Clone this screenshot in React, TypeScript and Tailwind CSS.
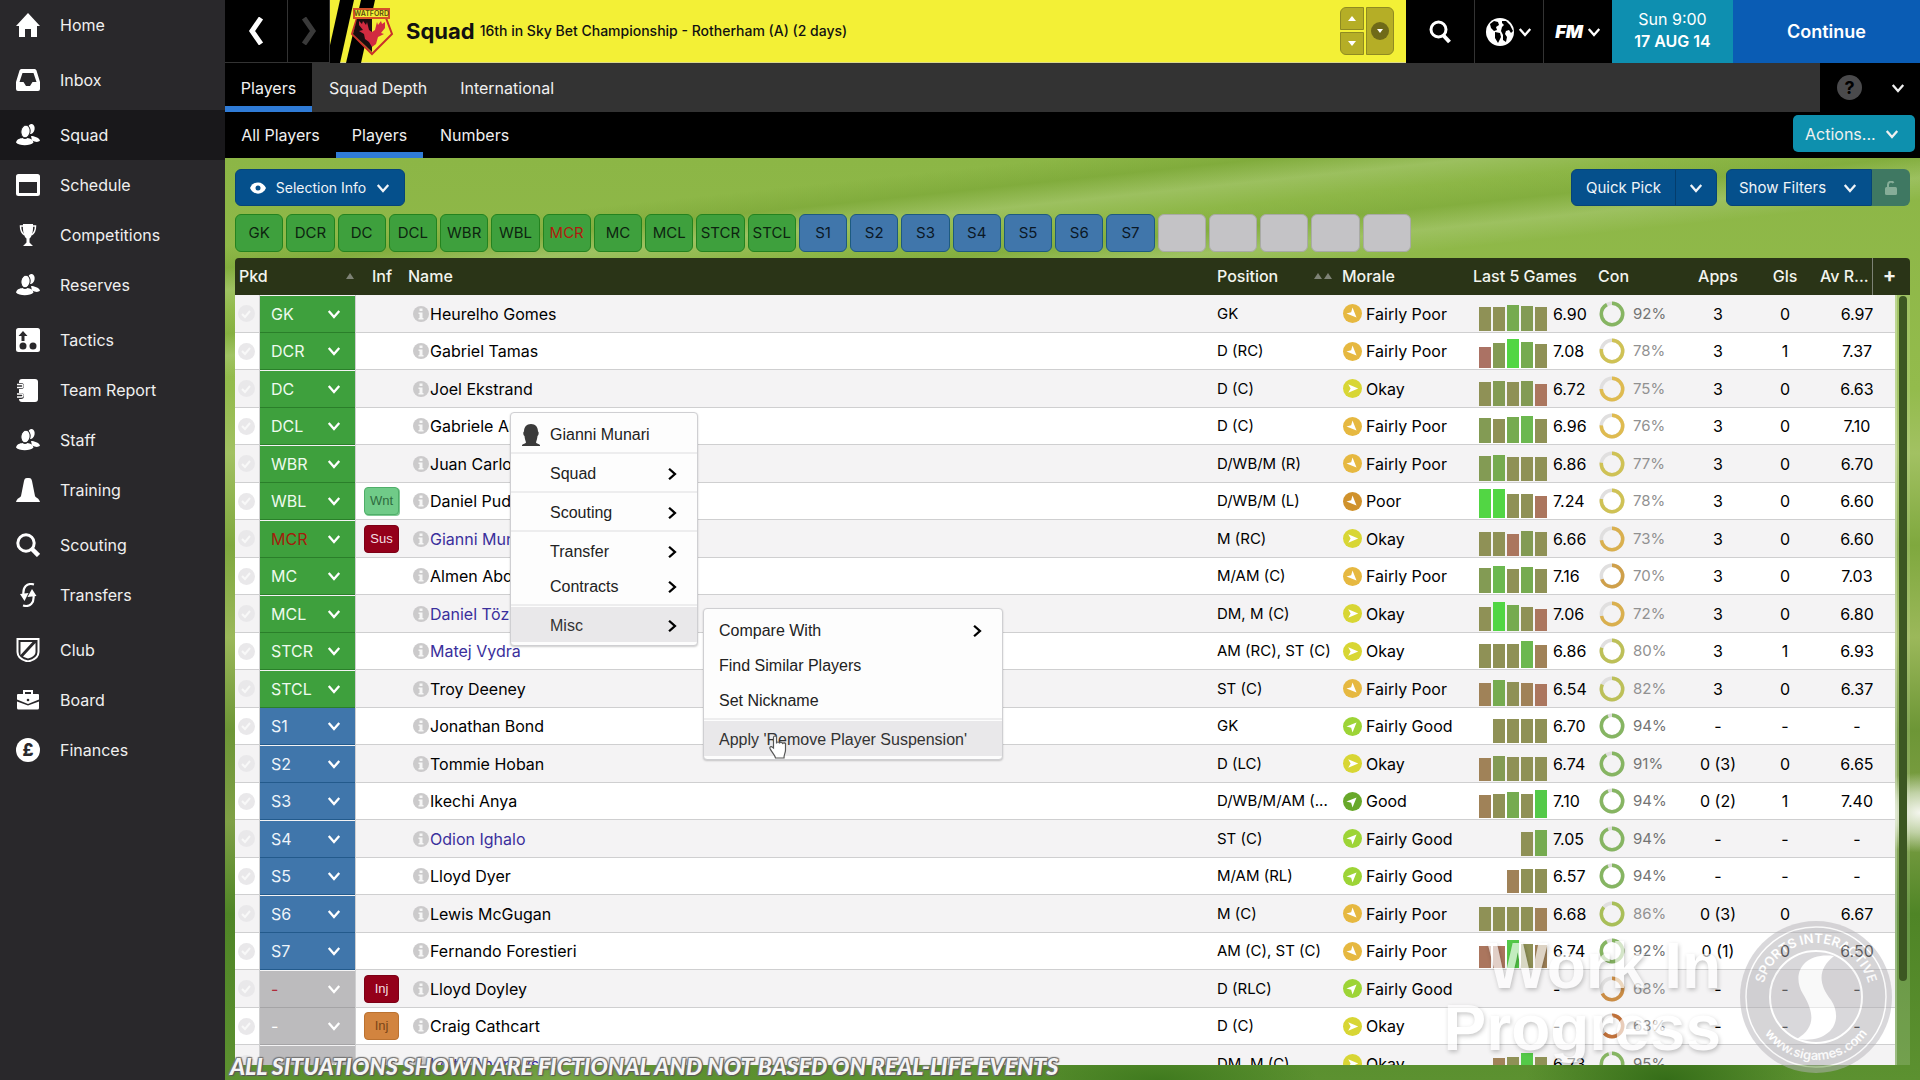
import type { ReactNode } from 'react'

type Player = {
  pick: string
  inf?: 'Wnt' | 'Sus' | 'Inj' | 'InjMinor'
  name: string
  loan?: boolean
  pos: string
  morale: string
  form: number[]
  rating: string
  con: number
  apps: string
  gls: string
  avg: string
}

const PLAYERS: Player[] = [
  { pick: 'GK', name: 'Heurelho Gomes', pos: 'GK', morale: 'Fairly Poor', form: [24, 24, 26, 25, 24], rating: '6.90', con: 92, apps: '3', gls: '0', avg: '6.97' },
  { pick: 'DCR', name: 'Gabriel Tamas', pos: 'D (RC)', morale: 'Fairly Poor', form: [21, 25, 29, 26, 24], rating: '7.08', con: 78, apps: '3', gls: '1', avg: '7.37' },
  { pick: 'DC', name: 'Joel Ekstrand', pos: 'D (C)', morale: 'Okay', form: [24, 25, 24, 25, 22], rating: '6.72', con: 75, apps: '3', gls: '0', avg: '6.63' },
  { pick: 'DCL', name: 'Gabriele Angella', pos: 'D (C)', morale: 'Fairly Poor', form: [25, 24, 26, 27, 24], rating: '6.96', con: 76, apps: '3', gls: '0', avg: '7.10' },
  { pick: 'WBR', name: 'Juan Carlos Paredes', pos: 'D/WB/M (R)', morale: 'Fairly Poor', form: [25, 26, 24, 24, 24], rating: '6.86', con: 77, apps: '3', gls: '0', avg: '6.70' },
  { pick: 'WBL', inf: 'Wnt', name: 'Daniel Pudil', pos: 'D/WB/M (L)', morale: 'Poor', form: [29, 29, 24, 24, 22], rating: '7.24', con: 78, apps: '3', gls: '0', avg: '6.60' },
  { pick: 'MCR', inf: 'Sus', name: 'Gianni Munari', loan: true, pos: 'M (RC)', morale: 'Okay', form: [24, 24, 22, 25, 24], rating: '6.66', con: 73, apps: '3', gls: '0', avg: '6.60' },
  { pick: 'MC', name: 'Almen Abdi', pos: 'M/AM (C)', morale: 'Fairly Poor', form: [25, 27, 24, 26, 24], rating: '7.16', con: 70, apps: '3', gls: '0', avg: '7.03' },
  { pick: 'MCL', name: 'Daniel Tözsér', loan: true, pos: 'DM, M (C)', morale: 'Okay', form: [24, 29, 26, 24, 22], rating: '7.06', con: 72, apps: '3', gls: '0', avg: '6.80' },
  { pick: 'STCR', name: 'Matej Vydra', loan: true, pos: 'AM (RC), ST (C)', morale: 'Okay', form: [24, 24, 24, 27, 23], rating: '6.86', con: 80, apps: '3', gls: '1', avg: '6.93' },
  { pick: 'STCL', name: 'Troy Deeney', pos: 'ST (C)', morale: 'Fairly Poor', form: [23, 26, 24, 23, 22], rating: '6.54', con: 82, apps: '3', gls: '0', avg: '6.37' },
  { pick: 'S1', name: 'Jonathan Bond', pos: 'GK', morale: 'Fairly Good', form: [24, 24, 24, 24], rating: '6.70', con: 94, apps: '-', gls: '-', avg: '-' },
  { pick: 'S2', name: 'Tommie Hoban', pos: 'D (LC)', morale: 'Okay', form: [23, 25, 24, 24, 24], rating: '6.74', con: 91, apps: '0 (3)', gls: '0', avg: '6.65' },
  { pick: 'S3', name: 'Ikechi Anya', pos: 'D/WB/M/AM (...', morale: 'Good', form: [23, 24, 26, 24, 28], rating: '7.10', con: 94, apps: '0 (2)', gls: '1', avg: '7.40' },
  { pick: 'S4', name: 'Odion Ighalo', loan: true, pos: 'ST (C)', morale: 'Fairly Good', form: [24, 26], rating: '7.05', con: 94, apps: '-', gls: '-', avg: '-' },
  { pick: 'S5', name: 'Lloyd Dyer', pos: 'M/AM (RL)', morale: 'Fairly Good', form: [23, 24, 24], rating: '6.57', con: 94, apps: '-', gls: '-', avg: '-' },
  { pick: 'S6', name: 'Lewis McGugan', pos: 'M (C)', morale: 'Fairly Poor', form: [24, 24, 24, 24, 23], rating: '6.68', con: 86, apps: '0 (3)', gls: '0', avg: '6.67' },
  { pick: 'S7', name: 'Fernando Forestieri', pos: 'AM (C), ST (C)', morale: 'Fairly Poor', form: [22, 22, 28, 24, 23], rating: '6.74', con: 92, apps: '0 (1)', gls: '0', avg: '6.50' },
  { pick: '-', inf: 'Inj', name: 'Lloyd Doyley', pos: 'D (RLC)', morale: 'Fairly Good', form: [], rating: '-', con: 68, apps: '-', gls: '-', avg: '-' },
  { pick: '-', inf: 'InjMinor', name: 'Craig Cathcart', pos: 'D (C)', morale: 'Okay', form: [], rating: '-', con: 63, apps: '-', gls: '-', avg: '-' },
  { pick: '', name: 'Keith Andrews', loan: true, pos: 'DM, M (C)', morale: 'Okay', form: [23, 24, 28, 24], rating: '6.73', con: 95, apps: '', gls: '', avg: '' },
]

const SLOTS = ['GK', 'DCR', 'DC', 'DCL', 'WBR', 'WBL', 'MCR', 'MC', 'MCL', 'STCR', 'STCL', 'S1', 'S2', 'S3', 'S4', 'S5', 'S6', 'S7', '', '', '', '', '']

const BAR_COLORS: Record<number, string> = {
  21: 'bg-[#ab7264]',
  22: 'bg-[#ab765e]',
  23: 'bg-[#a08258]',
  24: 'bg-[#8f9156]',
  25: 'bg-[#839b54]',
  26: 'bg-[#76ab50]',
  27: 'bg-[#6cb850]',
  28: 'bg-[#54c948]',
  29: 'bg-[#52d644]',
}

const MORALE: Record<string, { color: string; angle: number }> = {
  Good: { color: '#68a82a', angle: -45 },
  'Fairly Good': { color: '#9dd436', angle: -45 },
  Okay: { color: '#d8d634', angle: 0 },
  'Fairly Poor': { color: '#e6b840', angle: 45 },
  Poor: { color: '#d0922c', angle: 45 },
}

const BADGES = {
  Wnt: { text: 'Wnt', cls: 'bg-[#70cb88] text-[#2f6b40] border-[#4fae69] shadow-[1px_1px_0_#7fc893]' },
  Sus: { text: 'Sus', cls: 'bg-[#94001a] text-[#f3dfe2] border-[#7d0015]' },
  Inj: { text: 'Inj', cls: 'bg-[#94001a] text-[#f3dfe2] border-[#7d0015]' },
  InjMinor: { text: 'Inj', cls: 'bg-[#d2843f] text-[#7a4517] border-[#bb7231]' },
}

function Chevron({ className = 'w-3 h-3', dir = 'down' }: { className?: string; dir?: 'down' | 'right' | 'left' }) {
  const d = { down: 'M1.5 3.5L6 8.5L10.5 3.5', right: 'M3.5 1.5L8.5 6L3.5 10.5', left: 'M8.5 1.5L3.5 6L8.5 10.5' }[dir]
  return (
    <svg viewBox="0 0 12 12" className={className} fill="none" stroke="currentColor" strokeWidth="2" aria-hidden="true">
      <path d={d} />
    </svg>
  )
}

const people = (
  <>
    <ellipse cx="15" cy="6" rx="3.6" ry="5" transform="rotate(12 15 6)" />
    <path d="M15 13c3 0 8 1.500 9 4.500c-2 2.300-5 1.500-8 0z" />
    <ellipse cx="9.500" cy="8.500" rx="4.600" ry="6.200" stroke="#29282b" strokeWidth="1" transform="rotate(8 9.500 8.500)" />
    <path d="M0 19.500c1-3.500 4-4.200 6.500-4.500c1.500 1.200 3.500 1.200 5 0c3 .5 5.500 1.500 6 4.500c-3 3.700-14.500 3.700-17.500 0z" />
  </>
)

const ICONS: Record<string, ReactNode> = {
  Home: <path d="M12 0L24 13h-3v11h-6v-8H9v8H3V13H0z" />,
  Inbox: <path fillRule="evenodd" d="M5.500 1h13a2 2 0 0 1 2 1.500L24 14v7a2 2 0 0 1-2 2H2a2 2 0 0 1-2-2v-7L3.500 2.500a2 2 0 0 1 2-1.500zM6.500 5L3.500 14h4l2.500 4h4l2.500-4h4L17.500 5z" />,
  Squad: people,
  Schedule: <path fillRule="evenodd" d="M2.500 1h19A2.500 2.500 0 0 1 24 3.500v17a2.500 2.500 0 0 1-2.500 2.500h-19A2.500 2.500 0 0 1 0 20.500v-17A2.500 2.500 0 0 1 2.500 1zM3 9v11h18V9z" />,
  Competitions: (
    <>
      <path d="M7 1h10c.5 7-1 13-3.500 14.500v4L17 23H7l3.500-3.500v-4C8 14 6.500 8 7 1z" />
      <path d="M7 3H4.500c0 4 1 7 4 9M17 3h2.500c0 4-1 7-4 9" fill="none" stroke="currentColor" strokeWidth="1.500" />
    </>
  ),
  Reserves: people,
  Tactics: (
    <>
      <rect x="0" y="0" width="24" height="24" rx="2.500" />
      <g fill="#29282b">
        <path d="M7 3l4.500 5H8.500v5h-3V8H2.500z" />
        <circle cx="7" cy="18" r="3.500" />
        <circle cx="17" cy="18" r="3.500" />
      </g>
    </>
  ),
  'Team Report': (
    <>
      <rect x="3" y="1" width="19" height="23" rx="3" />
      <g fill="none" stroke="#29282b" strokeWidth="4">
        <path d="M0 7h5a1 1 0 0 1 0 2H0M0 17h5a1 1 0 0 1 0 2H0" />
      </g>
      <g fill="none" stroke="currentColor" strokeWidth="1.500">
        <path d="M1 6.500h4.500a1.500 1.500 0 0 1 0 3H1M1 16h4.500a1.500 1.500 0 0 1 0 3H1" />
      </g>
    </>
  ),
  Staff: people,
  Training: <path d="M11 0h2c2 0 2.500 1 3 3l3 15c1 2 4 2 5 6H0c1-4 4-4 5-6L8 3c.5-2 1-3 3-3z" />,
  Scouting: (
    <g fill="none" stroke="currentColor">
      <circle cx="10" cy="10" r="8.200" strokeWidth="3" />
      <path d="M15.500 15.500l7 7" strokeWidth="4.500" />
    </g>
  ),
  Transfers: (
    <>
      <path d="M18 1.500C11-.5 6.500 4 7.500 12M7 22.500c7 2 11.500-2.500 10.500-10.500" fill="none" stroke="currentColor" strokeWidth="2.200" />
      <path d="M4 11l4.500 7 4-8zM20.500 13L16 6l-4.500 8z" />
    </>
  ),
  Club: (
    <>
      <path d="M1.500 1h21v13c0 5-4 8-10.500 9.500C5.500 22 1.500 19 1.500 14z" fill="none" stroke="currentColor" strokeWidth="2" />
      <path d="M4.500 4h12L4.500 17zM19.500 5v9c0 3-3 5.500-7.500 6.500c-2-.5-4-1.200-5-2z" />
    </>
  ),
  Board: (
    <>
      <path d="M8 6V3h8v3" fill="none" stroke="currentColor" strokeWidth="2" />
      <path d="M2 6h20a1 1 0 0 1 1 1v4.500L12 16L1 11.500V7a1 1 0 0 1 1-1z" />
      <path d="M1 13.500l11 4 11-4V20a1.500 1.500 0 0 1-1.500 1.500h-19A1.500 1.500 0 0 1 1 20z" />
      <circle cx="12" cy="12" r="1.300" fill="#29282b" />
    </>
  ),
  Finances: (
    <>
      <circle cx="12" cy="12" r="12" />
      <text x="12" y="18" textAnchor="middle" fontSize="17" fontWeight="800" fill="#29282b">£</text>
    </>
  ),
}

const NAV_GROUPS = [
  ['Home'],
  ['Inbox'],
  ['Squad', 'Schedule', 'Competitions', 'Reserves'],
  ['Tactics', 'Team Report', 'Staff', 'Training'],
  ['Scouting', 'Transfers'],
  ['Club', 'Board', 'Finances'],
]

function Sidebar() {
  return (
    <nav className="w-[225px] shrink-0 bg-[#29282b] text-[#f0f0f0] flex flex-col gap-[5px]">
      {NAV_GROUPS.map((group) => (
        <ul key={group[0]}>
          {group.map((item) => (
            <li key={item}>
              <a href="#" className={`h-[50px] pl-4 flex items-center gap-5 ${item === 'Squad' ? 'bg-[#19181b]' : ''}`}>
                <svg viewBox="0 0 24 24" className="w-6 h-6 text-white" fill="currentColor" aria-hidden="true">
                  {ICONS[item]}
                </svg>
                {item}
              </a>
            </li>
          ))}
        </ul>
      ))}
    </nav>
  )
}

function ClubBadge() {
  return (
    <svg viewBox="0 0 76 63" className="w-[76px] h-[63px] shrink-0" aria-label="Watford">
      <path d="M10 0H24L10 63H0V45z" fill="#000" />
      <path d="M31 0H45L31 63H16z" fill="#000" />
      <path d="M27 18H56L62 34L42 54L22 34z" fill="#f3ee35" stroke="#c9302a" strokeWidth="2" />
      <path d="M27 19H42V52L23 34z" fill="#1a0d10" />
      <path d="M29 21l3 3 1-3 3 4 1-3 2 8 3 2 3-2 2-8 1 3 3-4 1 3 3-2 0 6-4 5 3 1-6 3-2 7-4 3-3-5-4-3-1-5-5-3 4-1-4-5z" fill="#d22b40" />
      <rect x="24" y="9" width="35" height="9" fill="#f3ee35" stroke="#d4512a" strokeWidth="2" />
      <text x="41.500" y="16" textAnchor="middle" fontSize="7" fontWeight="600" fill="#5a4a10">WATFORD</text>
    </svg>
  )
}

function TopBar() {
  return (
    <header className="h-[63px] flex bg-black text-white">
      <button aria-label="Back" className="w-[62px] grid place-items-center border-b border-[#333]">
        <svg viewBox="0 0 16 28" className="w-4 h-7" fill="none" stroke="currentColor" strokeWidth="5">
          <path d="M13 1L4 14L13 27" />
        </svg>
      </button>
      <button aria-label="Forward" className="w-[43px] grid place-items-center border-x border-b border-[#333] text-[#3a3a3a]">
        <svg viewBox="0 0 16 28" className="w-4 h-7" fill="none" stroke="currentColor" strokeWidth="5">
          <path d="M3 1L12 14L3 27" />
        </svg>
      </button>
      <div className="flex-1 min-w-0 bg-[#f3f036] text-[#111] flex items-center border-b border-[#dcd98a]">
        <ClubBadge />
        <h1 className="text-[22px] font-bold">Squad</h1>
        <p className="ml-[5px] text-sm font-medium whitespace-nowrap">16th in Sky Bet Championship - Rotherham (A) (2 days)</p>
        <div className="ml-auto mr-3 flex gap-[2px] h-12">
          <div className="w-6 flex flex-col gap-[2px]">
            <button aria-label="Previous team" className="flex-1 bg-[#b5ae26] border border-[#8f8a22] rounded-tl-md grid place-items-center">
              <span className="border-x-4 border-b-[5px] border-x-transparent border-b-white" />
            </button>
            <button aria-label="Next team" className="flex-1 bg-[#b5ae26] border border-[#8f8a22] rounded-bl-md grid place-items-center">
              <span className="border-x-4 border-t-[5px] border-x-transparent border-t-white" />
            </button>
          </div>
          <button aria-label="Team list" className="w-7 bg-[#b5ae26] border border-[#8f8a22] rounded-r-md grid place-items-center">
            <span className="w-[18px] h-[18px] rounded-full bg-[#6f6a18] grid place-items-center">
              <span className="border-x-[3px] border-t-[4px] border-x-transparent border-t-white" />
            </span>
          </button>
        </div>
      </div>
      <button aria-label="Search" className="w-[68px] grid place-items-center">
        <svg viewBox="0 0 24 24" className="w-6 h-6" fill="none" stroke="currentColor">
          <circle cx="10.500" cy="9.500" r="7.500" strokeWidth="3" />
          <path d="M15.500 15.500l6 6.500" strokeWidth="4" />
        </svg>
      </button>
      <button aria-label="World" className="w-[69px] border-l border-[#333] flex items-center justify-center gap-1">
        <svg viewBox="0 0 28 28" className="w-7 h-7">
          <circle cx="14" cy="14" r="14" fill="#fff" />
          <path d="M4 6l4-3 4 1 1 3-3 2 1 3-3 1-3-3zM9 14l5 1 1 4-3 6-3-5zM16 3l4 0 4 4 3 6-2 2-2-3-3 1-1 3 2 3-1 5-3-2 0-5-2-4 1-4 2-2-2-2z" fill="#000" />
        </svg>
        <Chevron className="w-[14px] h-[14px]" />
      </button>
      <button className="w-[69px] border-l border-[#333] flex items-center justify-center gap-1 text-lg font-black italic">
        FM
        <Chevron className="w-[14px] h-[14px]" />
      </button>
      <div className="w-[121px] pb-1 bg-[#0e8fb0] flex flex-col items-center justify-center leading-[22px]">
        <span>Sun 9:00</span>
        <strong className="font-semibold">17 AUG 14</strong>
      </div>
      <button className="w-[187px] bg-[#0a5cb4] text-lg font-semibold">Continue</button>
    </header>
  )
}

function Tabs() {
  return (
    <>
      <div className="h-[49px] bg-[#333] text-[#f0f0f0] flex">
        <a href="#" className="w-[87px] pt-[6px] bg-black border-b-[6px] border-[#2f7bd6] flex items-center justify-center">Players</a>
        <a href="#" className="px-[17px] flex items-center">Squad Depth</a>
        <a href="#" className="px-4 flex items-center">International</a>
        <div className="ml-auto w-[100px] bg-black flex items-center justify-between pl-[17px] pr-[15px]">
          <button aria-label="Help" className="w-[25px] h-[25px] rounded-full bg-[#4a4a4c] text-black text-lg leading-6 font-bold">?</button>
          <button aria-label="Expand"><Chevron className="w-[14px] h-[14px]" /></button>
        </div>
      </div>
      <div className="h-[46px] bg-black text-[#f0f0f0] flex">
        <a href="#" className="w-[111px] flex items-center justify-center">All Players</a>
        <a href="#" className="w-[87px] pt-[6px] border-b-[6px] border-[#2f7bd6] flex items-center justify-center">Players</a>
        <a href="#" className="px-[17px] flex items-center">Numbers</a>
        <button className="ml-auto mr-[5px] mt-[3px] w-[122px] h-[37px] rounded-[5px] bg-[#0e90ae] flex items-center justify-between pl-3 pr-4">
          Actions...
          <Chevron className="w-[14px] h-[14px]" />
        </button>
      </div>
    </>
  )
}

function Toolbar() {
  return (
    <div className="flex h-[37px] text-[#f0f4f8] text-[15px]">
      <button className="w-[170px] rounded-md bg-[#05508c] border border-[#064478] flex items-center justify-between px-[14px] text-sm whitespace-nowrap">
        <svg viewBox="0 0 16 12" className="w-4 h-3" aria-hidden="true">
          <path d="M0 6C3-1.500 13-1.500 16 6C13 13.500 3 13.500 0 6z" fill="#fff" />
          <circle cx="8" cy="6" r="2.500" fill="#05508c" />
        </svg>
        Selection Info
        <Chevron className="w-[14px] h-[14px]" />
      </button>
      <div className="ml-auto flex rounded-md bg-[#05508c] border border-[#064478]">
        <button className="w-[103px]">Quick Pick</button>
        <button aria-label="Quick pick options" className="w-[41px] border-l border-[#043d6d] grid place-items-center">
          <Chevron className="w-[14px] h-[14px]" />
        </button>
      </div>
      <button className="ml-[9px] w-[146px] rounded-l-md bg-[#05508c] border border-[#064478] flex items-center justify-between pl-3 pr-[14px]">
        Show Filters
        <Chevron className="w-[14px] h-[14px]" />
      </button>
      <button aria-label="Lock filters" className="w-[38px] rounded-r-md bg-[#3f7862] grid place-items-center text-[#86ad98]">
        <svg viewBox="0 0 14 14" className="w-[14px] h-[14px]" aria-hidden="true">
          <path d="M4 7V3.500a3 3 0 0 1 5.500-1.500" fill="none" stroke="currentColor" strokeWidth="2" />
          <rect x="1" y="6" width="12" height="8" rx="1.500" fill="currentColor" />
        </svg>
      </button>
    </div>
  )
}

function slotClass(slot: string) {
  if (!slot) return 'bg-[#c4c3c6] border-[#a9aaa6]'
  if (slot.length === 2 && slot[0] === 'S') return 'bg-[#4076ab] border-[#1d5a80] text-[#0b1826]'
  if (slot === 'MCR') return 'bg-[#3ea03d] border-[#23831f] text-[#b01c10]'
  return 'bg-[#3ea03d] border-[#23831f] text-[#0d2410]'
}

function pickClass(pick: string, i: number) {
  if (i > 17) return i === 18 ? 'bg-[#bcbbbd] border-[#a5a4a6] text-[#b02a3a]' : 'bg-[#bcbbbd] border-[#a5a4a6] text-white'
  if (i > 10) return 'bg-[#4076ab] border-[#235a8c] text-[#eef4fa]'
  if (pick === 'MCR') return 'bg-[#3ea03d] border-[#2a7f2a] text-[#a31d0c]'
  return 'bg-[#3ea03d] border-[#2a7f2a] text-[#eefaee]'
}

function conColor(v: number) {
  if (v >= 90) return '#86b562'
  if (v >= 85) return '#a9bf58'
  if (v >= 80) return '#bdc058'
  if (v >= 77) return '#cfc255'
  if (v >= 75) return '#dfbb50'
  if (v >= 72) return '#dab04e'
  if (v >= 70) return '#cfa04a'
  if (v >= 65) return '#cb8d45'
  return '#c2723a'
}

function ConRing({ value }: { value: number }) {
  return (
    <svg viewBox="0 0 26 26" className="w-[26px] h-[26px]" fill="none" strokeWidth="3.500" aria-hidden="true">
      <circle cx="13" cy="13" r="10.700" stroke="#e0dfdf" />
      <circle cx="13" cy="13" r="10.700" stroke={conColor(value)} pathLength={100} strokeDasharray={`${value} 100`} transform="rotate(-90 13 13)" />
    </svg>
  )
}

function PlayerRow({ p, i }: { p: Player; i: number }) {
  const badge = p.inf && BADGES[p.inf]
  const morale = MORALE[p.morale]
  return (
    <tr className="h-[38px] even:h-[37px] *:border-b *:border-[#cfcfd0] *:p-0 *:bg-[#f4f3f4] even:*:bg-white">
      <td>
        <label className="relative flex h-full items-center justify-center pr-[2px]">
          <input type="checkbox" aria-label={`Select ${p.name}`} className="appearance-none w-[17px] h-[17px] rounded-full bg-[#e9e8ea]" />
          <svg viewBox="0 0 12 12" className="absolute w-3 h-3" fill="none" stroke="#f8f8f8" strokeWidth="2" aria-hidden="true">
            <path d="M2 6l3 3 5-6" />
          </svg>
        </label>
      </td>
      <td className={`border-x ${pickClass(p.pick, i).replace(/bg-\S+/, '')}`}>
        <div className={`relative -mb-px flex h-[37px] items-center border-b ${pickClass(p.pick, i)}`}>
          <select aria-label={`Pick ${p.name}`} defaultValue={p.pick} className="appearance-none w-full pl-[11px] bg-transparent outline-none">
            <option>{p.pick}</option>
          </select>
          <Chevron className="absolute right-[14px] w-[14px] h-[14px] text-white pointer-events-none" />
        </div>
      </td>
      <td>
        {badge && (
          <span className={`ml-2 w-[35px] h-7 rounded border grid place-items-center text-[13px] font-['Liberation_Sans',sans-serif] ${badge.cls}`}>{badge.text}</span>
        )}
      </td>
      <td>
        <div className="flex items-center gap-px pl-2">
          <svg viewBox="0 0 16 16" className="w-4 h-4" aria-hidden="true">
            <circle cx="8" cy="8" r="8" fill="#cbcacb" />
            <path d="M6.500 2.500h3v2.500h-3zM5.500 6.500h4v5.500h1v1.500h-5V12h1V8h-1z" fill="#f6f6f6" />
          </svg>
          <a href="#" className={p.loan ? 'text-[#3a2f9c]' : ''}>{p.name}</a>
        </div>
      </td>
      <td className="text-[15px] whitespace-nowrap"><span className="pl-1">{p.pos}</span></td>
      <td>
        <div className="flex items-center gap-1 pl-[5px]">
          <svg viewBox="0 0 20 20" className="w-[19px] h-[19px]" aria-hidden="true">
            <circle cx="10" cy="10" r="10" fill={morale.color} />
            <path d="M16 10L5.500 5.500L8 10L5.500 14.500z" fill="#fff" transform={`rotate(${morale.angle} 10 10)`} />
          </svg>
          {p.morale}
        </div>
      </td>
      <td>
        <div className="flex items-center gap-[6px] pl-[10px]">
          <div className="w-[68px] h-[34px] flex items-end justify-end gap-[2px]">
            {p.form.map((h, n) => (
              <span key={n} className={`w-3 ${BAR_COLORS[h]}`} style={{ height: h }} />
            ))}
          </div>
          {p.rating}
        </div>
      </td>
      <td>
        <div className={`flex items-center gap-2 pl-[5px] text-[15px] ${p.con >= 90 ? 'text-[#737373]' : 'text-[#919191]'}`}>
          <ConRing value={p.con} />
          {p.con}%
        </div>
      </td>
      <td className="text-center">{p.apps}</td>
      <td className="text-center">{p.gls}</td>
      <td colSpan={2} className="text-center">{p.avg}</td>
      {i === 0 && (
        <td rowSpan={PLAYERS.length} className="bg-white/15! border-l-2 border-l-white/30! border-b-0! align-top">
          <div className="mt-px ml-[2px] w-2 h-[685px] rounded-full bg-[#3c5722]" />
        </td>
      )}
    </tr>
  )
}

function SortArrows({ count }: { count: number }) {
  return (
    <span className="flex gap-[2px]">
      {Array.from({ length: count }).map((_, i) => (
        <span key={i} className="border-x-4 border-b-[6px] border-x-transparent border-b-[#7d8275]" />
      ))}
    </span>
  )
}

function SquadTable() {
  return (
    <table className="w-full table-fixed border-separate border-spacing-0 text-black">
      <colgroup>
        <col className="w-6" />
        <col className="w-[97px]" />
        <col className="w-[49px]" />
        <col />
        <col className="w-[125px]" />
        <col className="w-[131px]" />
        <col className="w-[125px]" />
        <col className="w-[91px]" />
        <col className="w-[66px]" />
        <col className="w-[68px]" />
        <col className="w-[53px]" />
        <col className="w-[23px]" />
        <col className="w-[15px]" />
      </colgroup>
      <thead>
        <tr className="h-[37px] text-[#f3f4ee] text-left *:bg-[#2a3417] *:font-medium *:p-0 *:pb-[2px]">
          <th colSpan={2} className="rounded-tl">
            <div className="flex items-center justify-between pl-1 pr-[2px]">Pkd <SortArrows count={1} /></div>
          </th>
          <th><span className="pl-4">Inf</span></th>
          <th><span className="pl-[3px]">Name</span></th>
          <th>
            <div className="flex items-center justify-between pl-1 pr-[6px]">Position <SortArrows count={2} /></div>
          </th>
          <th><span className="pl-1">Morale</span></th>
          <th className="whitespace-nowrap"><span className="pl-1">Last 5 Games</span></th>
          <th><span className="pl-1">Con</span></th>
          <th><div className="text-center">Apps</div></th>
          <th><div className="text-center">Gls</div></th>
          <th className="whitespace-nowrap"><span className="pl-px">Av R...</span></th>
          <th colSpan={2} className="border-l border-[#7d8275] rounded-tr">
            <button aria-label="Add column" className="w-full pr-1 text-center text-xl leading-5 font-bold">+</button>
          </th>
        </tr>
      </thead>
      <tbody>
        {PLAYERS.map((p, i) => (
          <PlayerRow key={p.name} p={p} i={i} />
        ))}
      </tbody>
    </table>
  )
}

function MenuItem({ label, active, arrow, icon, wide }: { label: string; active?: boolean; arrow?: boolean; icon?: boolean; wide?: boolean }) {
  return (
    <button role="menuitem" className={`w-full h-[35px] pt-[2px] pr-[18px] flex items-center text-left ${wide ? 'pl-[15px]' : 'pl-[11px]'} ${active ? 'bg-[#e9e8ea] text-[#333]' : ''}`}>
      {!wide && (
        <span className="w-7">
          {icon && (
            <svg viewBox="0 0 18 22" className="w-[18px] h-[22px]" fill="#3a3a3a" aria-hidden="true">
              <path d="M9 0c4.500 0 7 3 7 7.500c1 0 1 3.500-.5 4.500c-.3 3-1 4.500-1.500 6.500c.5 1 3 1.500 4 2.500v1H0v-1c1-1 3.500-1.500 4-2.500c-.5-2-1.200-3.500-1.500-6.500C1 11 1 7.500 2 7.500C2 3 4.500 0 9 0z" />
            </svg>
          )}
        </span>
      )}
      <span className="flex-1">{label}</span>
      {arrow && <Chevron dir="right" className="w-[14px] h-[14px] text-black" />}
    </button>
  )
}

function ContextMenus() {
  const box = 'absolute rounded border border-[#cfcfd2] bg-[#fdfdfd] py-[2px] text-[#222] shadow-[0_1px_2px_#0003] divide-y-2 divide-[#ededee] *:py-px font-[\'Liberation_Sans\',sans-serif]'
  return (
    <>
      <div role="menu" className={`${box} left-[510px] top-[412px] w-[188px]`}>
        <div><MenuItem label="Gianni Munari" icon /></div>
        <div><MenuItem label="Squad" arrow /></div>
        <div><MenuItem label="Scouting" arrow /></div>
        <div>
          <MenuItem label="Transfer" arrow />
          <MenuItem label="Contracts" arrow />
        </div>
        <div><MenuItem label="Misc" arrow active /></div>
      </div>
      <div role="menu" className={`${box} left-[703px] top-[608px] w-[300px]`}>
        <div>
          <MenuItem wide label="Compare With" arrow />
          <MenuItem wide label="Find Similar Players" />
          <MenuItem wide label="Set Nickname" />
        </div>
        <div><MenuItem wide label="Apply 'Remove Player Suspension'" active /></div>
      </div>
      <svg viewBox="0 0 18 24" className="absolute left-[769px] top-[735px] w-[18px] h-6" fill="#fff" stroke="#555" strokeWidth="1.200" aria-hidden="true">
        <path d="M4.500 13V2.500a1.500 1.500 0 0 1 3 0V8.500a1.500 1.500 0 0 1 3 0a1.500 1.500 0 0 1 3 .5a1.500 1.500 0 0 1 3 .8V15c0 3-1.500 4-1.500 8H6.500C6 20 2.500 17 1 13.500c-.5-1.500 1-2.500 2.200-1.500z" />
      </svg>
    </>
  )
}

function Watermark() {
  return (
    <div className="pointer-events-none absolute right-[27px] bottom-[6px] flex items-center gap-[18px]">
      <p className="text-right text-[64px] leading-[62px] font-bold text-white opacity-65 font-['Liberation_Sans',sans-serif] [text-shadow:1px_2px_4px_#0005]">
        Work In
        <br />
        Progress
      </p>
      <svg viewBox="0 0 154 154" className="w-[154px] h-[154px] opacity-50">
        <defs>
          <path id="ring-top" d="M23 77a54 54 0 0 1 108 0" />
          <path id="ring-bottom" d="M14 77a63 63 0 0 0 126 0" />
        </defs>
        <circle cx="77" cy="77" r="76" fill="#b5b3b8" />
        <circle cx="77" cy="77" r="70" fill="#aeacb1" stroke="#fff" strokeWidth="1.500" />
        <circle cx="77" cy="77" r="46" fill="#b5b3b8" stroke="#fff" strokeWidth="2" />
        <path d="M95 36C64 32 52 54 64 74C76 94 76 108 58 119C90 124 106 102 92 80C78 62 80 48 95 36z" fill="#fff" />
        <g fill="#fff" fontSize="13" fontWeight="600" textAnchor="middle">
          <text><textPath href="#ring-top" startOffset="50%">SPORTS INTERACTIVE</textPath></text>
          <text><textPath href="#ring-bottom" startOffset="50%">www.sigames.com</textPath></text>
        </g>
      </svg>
    </div>
  )
}

export default function App() {
  return (
    <div className="relative h-screen overflow-hidden flex font-[Inter,sans-serif] text-base leading-5">
      <Sidebar />
      <div className="flex-1 min-w-0 flex flex-col">
        <TopBar />
        <Tabs />
        <main className="flex-1 min-h-0 flex flex-col px-[10px] pt-[11px] pb-[15px] bg-[radial-gradient(60px_40px_at_100%_71%,#f4f6ee,#e4ecd8aa_50%,transparent),radial-gradient(120px_30px_at_20%_100%,#7aa648,transparent),radial-gradient(160px_40px_at_55%_100%,#3f7a1e,transparent),radial-gradient(140px_60px_at_85%_100%,#356d18,transparent),linear-gradient(174deg,transparent_8%,#6f9c2d66_10%,#ffffff22_12%,transparent_14%,#6f9c2d55_16%,#ffffff22_18%,transparent_20%),linear-gradient(180deg,#8cb646_0%,#93bb4c_25%,#a2c162_32%,#7fa83e_42%,#9bb85a_52%,#6d9636_62%,#7fa046_72%,#4f8526_82%,#5c9130_100%)]">
          <Toolbar />
          <div className="mt-2 w-[1176px] grid grid-cols-[repeat(23,minmax(0,1fr))] gap-[3px]">
            {SLOTS.map((slot, i) => (
              <button key={i} aria-label={slot || 'Empty slot'} className={`h-[38px] rounded-md border text-[15px] ${slotClass(slot)}`}>
                {slot}
              </button>
            ))}
          </div>
          <div className="mt-[6px] flex-1 min-h-0 overflow-hidden">
            <SquadTable />
          </div>
        </main>
      </div>
      <ContextMenus />
      <Watermark />
      <p className="pointer-events-none absolute left-[230px] bottom-1 whitespace-nowrap text-[23px] leading-5 font-black italic text-[#f4f4f4] font-[Lato,sans-serif] [text-shadow:1px_1px_1px_#555,-1px_-1px_1px_#777,1px_-1px_1px_#777,-1px_1px_1px_#777]">
        ALL SITUATIONS SHOWN ARE FICTIONAL AND NOT BASED ON REAL-LIFE EVENTS
      </p>
    </div>
  )
}
